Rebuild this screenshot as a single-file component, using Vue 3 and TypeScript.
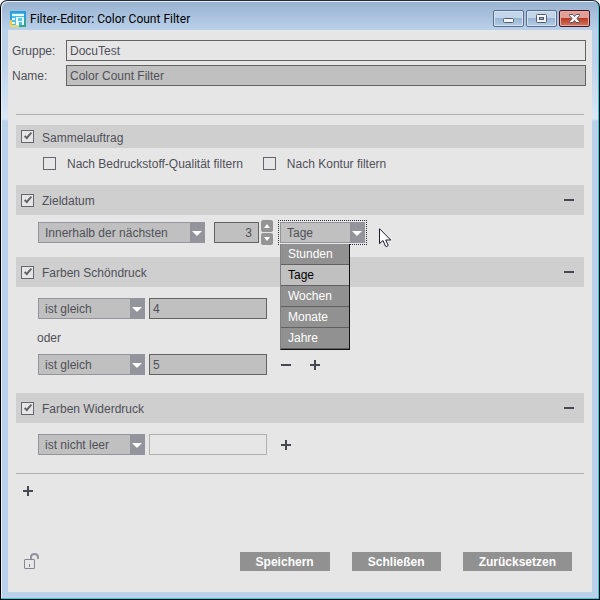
<script setup lang="ts">
import { reactive, ref } from 'vue'

interface Condition {
  operator: string
  value: string
}

interface ColorSection {
  id: string
  title: string
  enabled: boolean
  conditions: Condition[]
}

const group = ref('DocuTest')
const name = ref('Color Count Filter')
const gangJob = ref(true)
const byQuality = ref(false)
const byContour = ref(false)
const targetDate = ref(true)
const range = ref('Innerhalb der nächsten')
const amount = ref('3')
const unit = ref('Tage')
const unitOpen = ref(true)
const units = ['Stunden', 'Tage', 'Wochen', 'Monate', 'Jahre']
const operators = ['ist gleich', 'ist nicht leer']

const sections = reactive<ColorSection[]>([
  {
    id: 'front',
    title: 'Farben Schöndruck',
    enabled: true,
    conditions: [
      { operator: 'ist gleich', value: '4' },
      { operator: 'ist gleich', value: '5' },
    ],
  },
  {
    id: 'back',
    title: 'Farben Widerdruck',
    enabled: true,
    conditions: [{ operator: 'ist nicht leer', value: '' }],
  },
])

function step(delta: number) {
  amount.value = String(Math.max(0, Number(amount.value) + delta))
}

function pickUnit(value: string) {
  unit.value = value
  unitOpen.value = false
}

function addCondition(section: ColorSection) {
  section.conditions.push({ operator: 'ist gleich', value: '' })
}
</script>

<template>
  <div class="window">
    <header class="titlebar">
      <svg class="app-icon" viewBox="0 0 16 16" aria-hidden="true">
        <rect width="16" height="16" rx="1" fill="#2a9fd8" />
        <path d="M0 9h4v7H0z" fill="#f3c83c" />
        <path d="M0 14h9v2H0z" fill="#f5d65a" />
        <path d="M9 14h7v2H9zM14 8h2v7h-2z" fill="#35a88c" />
        <rect x="2" y="2" width="12" height="12" fill="#48bdf0" />
        <path d="M2 3h12v2H2zM2 7h3v2H2zM2 11h3v2H2zM6 6h8v8h-2v-3H9v3H6z" fill="#e9fbff" />
        <path d="M8 7h4v3H8z" fill="#58c4f0" />
      </svg>
      <h1 class="title">Filter-Editor: Color Count Filter</h1>
      <div class="window-buttons">
        <button type="button" class="win-btn" aria-label="Minimieren">
          <svg viewBox="0 0 29 15"><rect x="9.500" y="7.500" width="10" height="4" rx="1" fill="#f5f5f5" stroke="#525e70" /></svg>
        </button>
        <button type="button" class="win-btn" aria-label="Maximieren">
          <svg viewBox="0 0 29 15">
            <rect x="9.500" y="3.500" width="10" height="8" rx="1" fill="#f5f5f5" stroke="#525e70" />
            <rect x="12.500" y="6.500" width="4" height="2" fill="#8eabc9" stroke="#525e70" />
          </svg>
        </button>
        <button type="button" class="win-btn close" aria-label="Fenster schließen">
          <svg viewBox="0 0 29 15">
            <path d="M9.500 3.500h3.500l1.500 2 1.500-2h3.500v1l-2.500 3 2.500 3v1h-3.500l-1.500-2-1.500 2H9.500v-1l2.500-3-2.500-3z" fill="#f7f7f7" stroke="#5b5364" />
          </svg>
        </button>
      </div>
    </header>

    <main class="client">
      <div class="fields">
        <label for="group">Gruppe:</label>
        <input id="group" v-model="group" type="text" class="text light" />
        <label for="name">Name:</label>
        <input id="name" v-model="name" type="text" class="text" />
      </div>

      <div class="filters">
        <section>
          <div class="bar small">
            <label class="check"><input v-model="gangJob" type="checkbox" /><span>Sammelauftrag</span></label>
          </div>
          <div class="options">
            <label class="check wide"><input v-model="byQuality" type="checkbox" /><span>Nach Bedruckstoff-Qualität filtern</span></label>
            <label class="check wide"><input v-model="byContour" type="checkbox" /><span>Nach Kontur filtern</span></label>
          </div>
        </section>

        <section class="date">
          <div class="bar">
            <label class="check"><input v-model="targetDate" type="checkbox" /><span>Zieldatum</span></label>
            <button type="button" class="sign minus" aria-label="Zieldatum entfernen"></button>
          </div>
          <div class="row">
            <span class="combo range">
              <select v-model="range" aria-label="Zeitraum">
                <option>Innerhalb der nächsten</option>
              </select>
            </span>
            <div class="spinner">
              <input v-model="amount" type="text" class="text number" aria-label="Anzahl" />
              <div class="steps">
                <button type="button" aria-label="Erhöhen" @click="step(1)"><i class="up"></i></button>
                <button type="button" aria-label="Verringern" @click="step(-1)"><i class="down"></i></button>
              </div>
            </div>
            <div class="unit">
              <span class="combo">
                <select v-model="unit" aria-label="Einheit" @mousedown.prevent="unitOpen = !unitOpen">
                  <option v-for="u in units" :key="u">{{ u }}</option>
                </select>
              </span>
              <div v-if="unitOpen" class="menu" role="listbox" aria-label="Einheit">
                <button
                  v-for="u in units"
                  :key="u"
                  type="button"
                  role="option"
                  :aria-selected="u === unit"
                  :class="{ selected: u === unit }"
                  @click="pickUnit(u)"
                >{{ u }}</button>
              </div>
              <svg class="pointer" viewBox="0 0 13 20" aria-hidden="true">
                <path d="M.5.700v15l3.500-3.200 2.500 5.700q1.300 1 2.700-.8L6.700 12h5z" fill="#fff" stroke="#1c1c30" stroke-linejoin="round" />
              </svg>
            </div>
          </div>
        </section>

        <section v-for="section in sections" :key="section.id">
          <div class="bar">
            <label class="check"><input v-model="section.enabled" type="checkbox" /><span>{{ section.title }}</span></label>
            <button type="button" class="sign minus" :aria-label="section.title + ' entfernen'"></button>
          </div>
          <div class="conditions">
            <template v-for="(condition, i) in section.conditions" :key="i">
              <p v-if="i > 0" class="or">oder</p>
              <div class="condition">
                <span class="combo operator">
                  <select v-model="condition.operator" :aria-label="section.title + ' Operator'">
                    <option v-for="op in operators" :key="op">{{ op }}</option>
                  </select>
                </span>
                <input
                  v-model="condition.value"
                  type="text"
                  class="text value"
                  :disabled="condition.operator === 'ist nicht leer'"
                  :aria-label="section.title + ' Wert'"
                />
                <div v-if="i === section.conditions.length - 1" class="actions">
                  <button v-if="i > 0" type="button" class="sign minus" aria-label="Bedingung entfernen" @click="section.conditions.pop()"></button>
                  <button type="button" class="sign plus" aria-label="Bedingung hinzufügen" @click="addCondition(section)"></button>
                </div>
              </div>
            </template>
          </div>
        </section>
      </div>

      <div class="add">
        <button type="button" class="sign plus" aria-label="Filter hinzufügen"></button>
      </div>

      <footer class="footer">
        <button type="button" class="lock" aria-label="Entsperrt">
          <svg viewBox="0 0 16 17">
            <rect x=".5" y="6.500" width="10" height="9" rx=".5" fill="none" stroke="#85858e" />
            <path d="M5.500 11v3" stroke="#85858e" />
            <path d="M7 6V4q0-3 3.500-3T14 4v2" fill="none" stroke="#9494a0" stroke-width="2" />
          </svg>
        </button>
        <div class="buttons">
          <button type="button">Speichern</button>
          <button type="button">Schließen</button>
          <button type="button">Zurücksetzen</button>
        </div>
      </footer>
    </main>
  </div>
</template>

<style>
body {
  background: #fff;
}
</style>

<style scoped>
*,
*::before,
*::after {
  box-sizing: border-box;
}

.window {
  display: flex;
  flex-direction: column;
  min-height: 100vh;
  padding: 0 7px 7px 6px;
  border: 1px solid #000;
  border-top-color: #252a33;
  border-radius: 7px 7px 0 0;
  background: linear-gradient(#98b1d0 0, #b9d1ea 29px, #bcd3eb 60px, #dae7f5 118px, #b9d1ea 120px);
  box-shadow: inset -1px -1px 0 #1fcfe8, inset 1px 1px 0 #e3effa;
  color: #505059;
  font: 12px/16px "Liberation Sans", Arial, sans-serif;
}

button,
input,
select {
  margin: 0;
  padding: 0;
  border: 0;
  border-radius: 0;
  color: inherit;
  font: inherit;
}

.titlebar {
  display: flex;
  align-items: center;
  height: 29px;
  padding: 6px 2px 0 3px;
}

.app-icon {
  width: 16px;
  height: 16px;
}

.title {
  flex: 1;
  margin: 0 0 0 4px;
  color: #000;
  font: 12px/16px Roboto, "Noto Sans", sans-serif;
}

.window-buttons {
  display: flex;
  gap: 2px;
}

.win-btn {
  width: 31px;
  height: 17px;
  border: 1px solid #596d88;
  border-radius: 2px;
  background: linear-gradient(#c3d5e9 0 45%, #98b5d3 50%, #b4cde7);
  box-shadow: inset 0 0 0 1px #d5e3f2;
}

.win-btn.close {
  border-color: #49141f;
  background: linear-gradient(#e0a096 0 45%, #b93c27 50%, #d2775c);
  box-shadow: inset 0 0 0 1px #e7aaa0;
}

.win-btn svg {
  display: block;
  width: 29px;
  height: 15px;
}

.client {
  display: flex;
  flex: 1;
  flex-direction: column;
  margin: 0 0 0 1px;
  background: #e6e6e6;
}

.fields {
  display: grid;
  grid-template-columns: 50px 1fr;
  align-items: center;
  gap: 4px;
  padding: 10px 6px 0 4px;
}

.text {
  min-width: 0;
  height: 21px;
  padding: 0 3px;
  border: 1px solid #636363;
  background: #c0c0c0;
}

.text.light {
  background: #e6e6e6;
}

.text:disabled {
  border-color: #b0b0b0;
  background: #e6e6e6;
}

.filters {
  display: flex;
  flex-direction: column;
  margin: 28px 8px 0;
  padding: 10px 0 18px;
  border: solid #b0b0b0;
  border-width: 1px 0;
}

.bar {
  display: flex;
  align-items: center;
  justify-content: space-between;
  height: 30px;
  padding: 0 10px 0 5px;
  background: #cfcfcf;
}

.bar.small {
  height: 23px;
}

.check {
  display: flex;
  align-items: center;
  gap: 8px;
}

.check.wide {
  gap: 11px;
}

.check span {
  padding-top: 2px;
}

.check input {
  flex: none;
  width: 13px;
  height: 13px;
  border: 1px solid #65656b;
  appearance: none;
  background: #e6e6e6;
}

.check input:checked::before {
  content: "";
  display: block;
  width: 8px;
  height: 4px;
  margin: 2px 0 0 2px;
  border: solid #65656b;
  border-width: 0 0 2px 2px;
  transform: rotate(-50deg);
}

.options {
  display: flex;
  gap: 20px;
  height: 37px;
  padding: 6px 0 0 27px;
  align-items: flex-start;
}

.date {
  height: 72px;
}

.row {
  display: flex;
  align-items: center;
  padding: 5px 0 0 22px;
}

.combo {
  position: relative;
  display: block;
  height: 21px;
}

.combo select {
  display: block;
  width: 100%;
  height: 21px;
  padding: 0 18px 0 6px;
  border: 1px solid #94949a;
  appearance: none;
  background: linear-gradient(to left, #94949c 14px, #c0c0c0 14px);
}

.combo::after {
  content: "";
  position: absolute;
  top: 9px;
  right: 3px;
  border: solid transparent;
  border-width: 5px 5px 0;
  border-top-color: #fff;
  pointer-events: none;
}

.range {
  width: 167px;
}

.operator {
  width: 107px;
}

.spinner {
  display: flex;
  align-items: center;
  gap: 2px;
  margin: 0 5px 0 9px;
}

.number {
  width: 45px;
  padding-right: 6px;
  text-align: right;
}

.steps {
  display: flex;
  flex-direction: column;
  gap: 1px;
}

.steps button {
  display: grid;
  place-items: center;
  width: 12px;
  height: 12px;
  border-radius: 2px;
  background: #949494;
}

.steps i {
  border: solid transparent;
}

.steps .up {
  border-width: 0 3px 4px;
  border-bottom-color: #fff;
}

.steps .down {
  border-width: 4px 3px 0;
  border-top-color: #fff;
}

.unit {
  position: relative;
  width: 89px;
  padding: 1px;
  border: 1px dotted #303038;
}

.menu {
  position: absolute;
  z-index: 1;
  top: 23px;
  left: 1px;
  display: flex;
  flex-direction: column;
  width: 70px;
  border: solid #111;
  border-width: 0 1px 1px 0;
  border-left: 1px solid #808084;
}

.menu button {
  height: 21px;
  padding: 0 0 0 7px;
  border-bottom: 1px solid #606060;
  background: #919191;
  color: #fff;
  text-align: left;
}

.menu .selected {
  background: #c0c0c0;
  color: #000;
}

.pointer {
  position: absolute;
  top: 7px;
  left: 100px;
  width: 13px;
  height: 20px;
}

.conditions {
  padding: 11px 0 18px 22px;
}

section:last-child .conditions {
  padding-bottom: 0;
}

.condition {
  display: flex;
  align-items: center;
  gap: 4px;
}

.value {
  width: 118px;
}

.actions {
  display: flex;
  gap: 19px;
  margin-left: 10px;
}

.or {
  margin: 0 0 0 -1px;
  padding: 11px 0 8px;
}

.sign {
  width: 10px;
  height: 10px;
  background: linear-gradient(#484850, #484850) center / 10px 2px no-repeat;
}

.sign.plus {
  background:
    linear-gradient(#484850, #484850) center / 10px 2px no-repeat,
    linear-gradient(#484850, #484850) center / 2px 10px no-repeat;
}

.add {
  display: flex;
  padding: 12px 15px;
}

.footer {
  display: flex;
  align-items: center;
  justify-content: space-between;
  margin-top: auto;
  padding: 0 20px 21px 16px;
}

.lock {
  background: none;
}

.lock svg {
  display: block;
  width: 16px;
  height: 17px;
}

.buttons {
  display: flex;
  gap: 22px;
}

.buttons button {
  min-width: 89px;
  height: 19px;
  padding: 0 16px;
  background: #919191;
  color: #fff;
  font-weight: bold;
}
</style>
